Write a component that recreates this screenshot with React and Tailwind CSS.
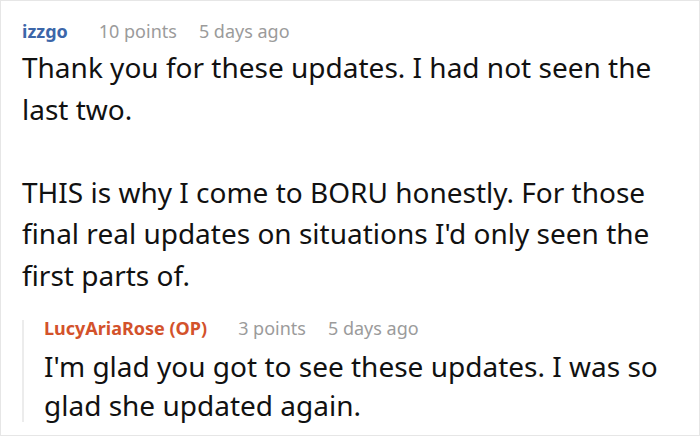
import React from 'react';

const comment = {
  author: 'izzgo',
  points: '10 points',
  time: '5 days ago',
  paragraphs: [
    'Thank you for these updates. I had not seen the last two.',
    "THIS is why I come to BORU honestly. For those final real updates on situations I'd only seen the first parts of.",
  ],
  reply: {
    author: 'LucyAriaRose (OP)',
    points: '3 points',
    time: '5 days ago',
    text: "I'm glad you got to see these updates. I was so glad she updated again.",
  },
};

const Meta = ({ author, points, time, color }) => (
  <div className="flex items-center text-[18px] leading-[24px]">
    <span className={`font-bold ${color}`}>{author}</span>
    <span className="ml-[31px] text-[#9b9b9b]">{points}</span>
    <span className="ml-[22px] text-[#9b9b9b]">{time}</span>
  </div>
);

const App = () => {
  return (
    <div
      className="w-[700px] h-[436px] bg-white border border-[#e6e6e6] overflow-hidden"
      style={{ fontFamily: '"Noto Sans", "Open Sans", sans-serif' }}
    >
      <div className="pl-[21px] pr-[20px] pt-[18px]">
        <Meta author={comment.author} points={comment.points} time={comment.time} color="text-[#3c66a9]" />
        <div className="text-[28px] leading-[41.5px] text-[#111] mt-[4px] max-w-[650px]">
          <p>{comment.paragraphs[0]}</p>
          <p className="mt-[41.5px]">{comment.paragraphs[1]}</p>
        </div>
        <div className="flex mt-[20px]">
          <div className="w-[2px] bg-[#ececec] mt-[4px] mb-[2px]" />
          <div className="pl-[20px]">
            <Meta
              author={comment.reply.author}
              points={comment.reply.points}
              time={comment.reply.time}
              color="text-[#d3522b]"
            />
            <p className="text-[28px] leading-[38.5px] text-[#111] mt-[7px] max-w-[640px]">{comment.reply.text}</p>
          </div>
        </div>
      </div>
    </div>
  );
};

export default App;
